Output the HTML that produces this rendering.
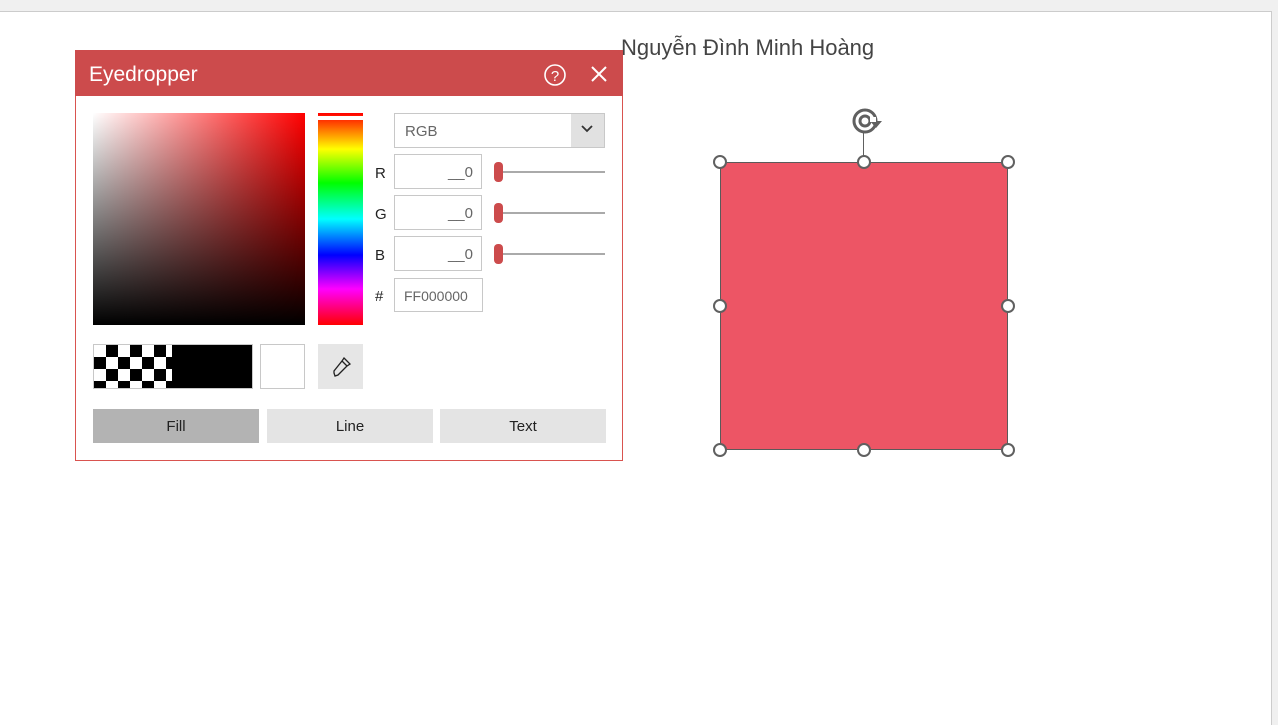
<!DOCTYPE html>
<html><head><meta charset="utf-8"><style>
body{margin:0;width:1278px;height:725px;background:#f0f0f0;position:relative;overflow:hidden;font-family:"Liberation Sans",sans-serif}
.a{position:absolute;box-sizing:border-box}
.inp{border:1px solid #c8c8c8;background:#fff;color:#666;font-size:15px;text-align:right;padding:9px 8px 0 0}
.lbl{font-size:15px;color:#222}
.track{height:2px;background:#aaa;width:108px;left:497px}
.thumb{width:9px;height:20px;background:#cc4b4c;border-radius:4px;left:494px}
.btn{background:#e4e4e4;font-size:15px;color:#222;text-align:center;line-height:36px;height:34px;top:409px}
.h{width:14px;height:14px;border:2px solid #606060;background:#fff;border-radius:50%}
</style></head><body>
<div class="a" style="left:0;top:11px;width:1272px;height:714px;background:#fff;border-right:1px solid #ccc;border-top:1px solid #ccc"></div>
<div class="a" style="left:621px;top:35px;font-size:22px;color:#444;font-family:'Liberation Sans','DejaVu Sans',sans-serif;white-space:nowrap">Nguyễn Đình Minh Hoàng</div>
<div class="a" style="left:720px;top:162px;width:288px;height:288px;background:#ed5565;border:1px solid #5a5a5a"></div>
<div class="a" style="left:863px;top:132px;width:1px;height:30px;background:#606060"></div>
<svg class="a" style="left:850px;top:106px" width="34" height="30" viewBox="0 0 34 30"><circle cx="15" cy="15" r="11" fill="none" stroke="#606060" stroke-width="3"/><circle cx="15" cy="15" r="5" fill="none" stroke="#606060" stroke-width="3"/><path d="M20 15 L32 15 L26 22 Z" fill="#606060"/><rect x="20" y="11" width="6" height="5" fill="#fff"/></svg>
<div class="a h" style="left:713px;top:155px"></div><div class="a h" style="left:857px;top:155px"></div><div class="a h" style="left:1001px;top:155px"></div>
<div class="a h" style="left:713px;top:299px"></div><div class="a h" style="left:1001px;top:299px"></div>
<div class="a h" style="left:713px;top:443px"></div><div class="a h" style="left:857px;top:443px"></div><div class="a h" style="left:1001px;top:443px"></div>

<div class="a" style="left:75px;top:50px;width:548px;height:411px;background:#fff;border:1px solid #d9534f"></div>
<div class="a" style="left:75px;top:50px;width:548px;height:46px;background:#cc4b4c;color:#fff;font-size:21px;padding:13px 0 0 14px">Eyedropper</div>
<svg class="a" style="left:543px;top:63px" width="24" height="24"><circle cx="12" cy="12" r="10" fill="none" stroke="#fff" stroke-width="1.6"/><text x="12" y="18" fill="#fff" font-size="15" text-anchor="middle" font-family="Liberation Sans">?</text></svg>
<svg class="a" style="left:589px;top:64px" width="20" height="20"><path d="M3 3L17 17M17 3L3 17" stroke="#fff" stroke-width="2"/></svg>

<div class="a" style="left:93px;top:113px;width:212px;height:212px;background:linear-gradient(to right,#fff,#f00)"></div>
<div class="a" style="left:93px;top:113px;width:212px;height:212px;background:linear-gradient(to bottom,rgba(0,0,0,0),#000)"></div>
<div class="a" style="left:318px;top:113px;width:45px;height:212px;background:linear-gradient(to bottom,#f00,#ff0 17%,#0f0 33%,#0ff 50%,#00f 67%,#f0f 83%,#f00)"></div>
<div class="a" style="left:318px;top:116px;width:45px;height:4px;background:#fff"></div>

<div class="a" style="left:394px;top:113px;width:211px;height:35px;border:1px solid #c8c8c8;font-size:15px;color:#666;padding:9px 0 0 10px">RGB</div>
<div class="a" style="left:571px;top:114px;width:33px;height:33px;background:#e1e1e1"></div>
<svg class="a" style="left:580px;top:124px" width="14" height="10"><path d="M2 2L7 7L12 2" fill="none" stroke="#333" stroke-width="1.8"/></svg>

<div class="a lbl" style="left:375px;top:165px">R</div><div class="a inp" style="left:394px;top:154px;width:88px;height:35px">__0</div>
<div class="a lbl" style="left:375px;top:206px">G</div><div class="a inp" style="left:394px;top:195px;width:88px;height:35px">__0</div>
<div class="a lbl" style="left:375px;top:247px">B</div><div class="a inp" style="left:394px;top:236px;width:88px;height:35px">__0</div>
<div class="a lbl" style="left:375px;top:288px">#</div><div class="a inp" style="left:394px;top:278px;width:89px;height:34px;text-align:left;padding-left:9px;font-size:14px">FF000000</div>
<div class="a track" style="top:171px"></div><div class="a thumb" style="top:162px"></div>
<div class="a track" style="top:212px"></div><div class="a thumb" style="top:203px"></div>
<div class="a track" style="top:253px"></div><div class="a thumb" style="top:244px"></div>

<div class="a" style="left:93px;top:344px;width:160px;height:45px;border:1px solid #c8c8c8;background:#000;overflow:hidden">
<div style="width:78px;height:45px;background-color:#fff;background-image:conic-gradient(#000 25%,#fff 0 50%,#000 0 75%,#fff 0);background-size:24px 24px"></div></div>
<div class="a" style="left:260px;top:344px;width:45px;height:45px;border:1px solid #c8c8c8"></div>
<div class="a" style="left:318px;top:344px;width:45px;height:45px;background:#e6e6e6"></div>
<svg class="a" style="left:328px;top:354px" width="26" height="26" viewBox="0 0 26 26"><path d="M16 4l6 6-3 2-5-5z M14 7l5 5-9 9-3 1 -1-3 0-2z" fill="none" stroke="#222" stroke-width="1.3"/></svg>

<div class="a btn" style="left:93px;width:166px;background:#b3b3b3">Fill</div>
<div class="a btn" style="left:267px;width:166px">Line</div>
<div class="a btn" style="left:440px;width:166px">Text</div>
</body></html>
